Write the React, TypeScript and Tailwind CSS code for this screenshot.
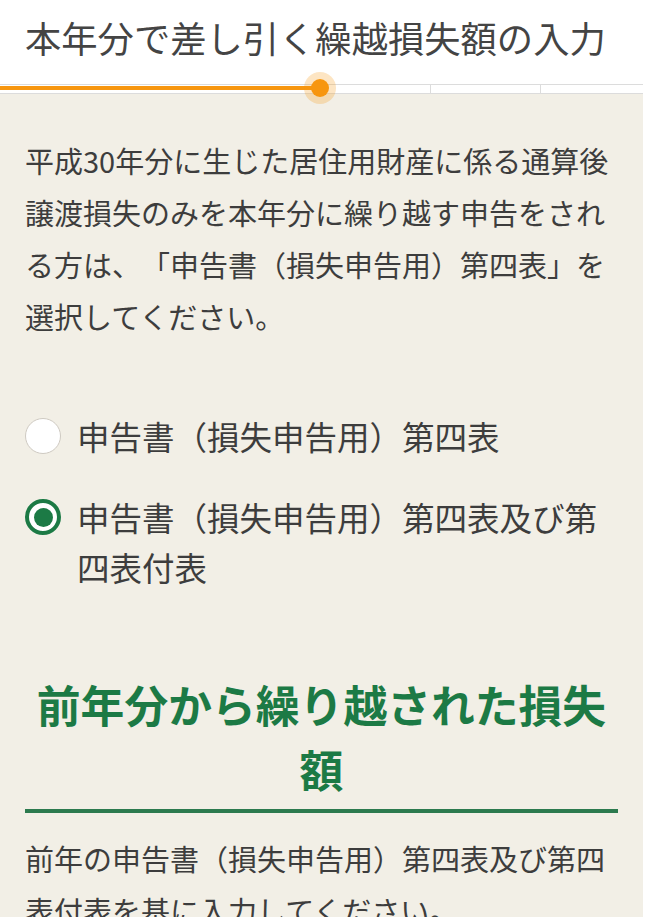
import React from "react";

const font = { fontFamily: '"Noto Sans CJK JP", "Noto Sans", sans-serif' };

function Radio({ checked, label }: { checked: boolean; label: string }) {
  return (
    <label className="flex items-start gap-[16px]">
      <span className="flex h-[50px] shrink-0 items-center">
        {checked ? (
          <span className="flex h-[36px] w-[36px] items-center justify-center rounded-full border-[4px] border-[#1c7a45] bg-white">
            <span className="h-[19px] w-[19px] rounded-full bg-[#1c7a45]" />
          </span>
        ) : (
          <span className="h-[36px] w-[36px] rounded-full border-[1.5px] border-[#cfcac2] bg-white" />
        )}
      </span>
      <span className="text-[32.5px] leading-[50px] text-[#3d3d3d]">{label}</span>
    </label>
  );
}

export default function App() {
  return (
    <div className="flex min-h-[917px] w-[654px] bg-white [text-spacing-trim:space-all]" style={font}>
      <div className="w-[643px]">
        {/* header */}
        <div className="bg-white">
          <h1 className="px-[25px] pt-[13px] text-[36.3px] leading-[48px] font-normal text-[#444]">
            本年分で差し引く繰越損失額の入力
          </h1>
          <div className="relative mt-[23px] h-[10px] border-y border-[#dcdcdc] bg-white">
            <div className="flex h-full">
              <div className="w-[430px]" />
              <div className="w-[110px] border-l border-[#dcdcdc]" />
              <div className="flex-1 border-l border-[#dcdcdc]" />
            </div>
            <div className="absolute left-0 top-[1px] h-[4px] w-[320px] bg-[#f7960f]" />
            <div className="absolute left-[304px] top-[-13px] h-[32px] w-[32px] rounded-full bg-[#f7960f]/25" />
            <div className="absolute left-[311px] top-[-6px] h-[18px] w-[18px] rounded-full bg-[#f7960f]" />
          </div>
        </div>

        {/* body */}
        <div className="bg-[#f2efe6] px-[25px] pt-[40px] pb-[40px]">
          <p className="text-[29px] leading-[52px] text-[#3d3d3d]">
            平成30年分に生じた居住用財産に係る通算後譲渡損失のみを本年分に繰り越す申告をされる方は、「申告書（損失申告用）第四表」を選択してください。
          </p>

          <div className="mt-[69px] flex flex-col gap-[31px]">
            <Radio checked={false} label="申告書（損失申告用）第四表" />
            <Radio checked={true} label="申告書（損失申告用）第四表及び第四表付表" />
          </div>

          <h2 className="mt-[80px] pb-[7px] text-center text-[43.8px] leading-[65px] font-bold text-[#1c7a45]">
            前年分から繰り越された損失額
          </h2>
          <div className="border-t-[4px] border-[#2c7a4e]" />

          <p className="mt-[19px] text-[29px] leading-[52px] text-[#3d3d3d]">
            前年の申告書（損失申告用）第四表及び第四表付表を基に入力してください。
          </p>
        </div>
      </div>
    </div>
  );
}
